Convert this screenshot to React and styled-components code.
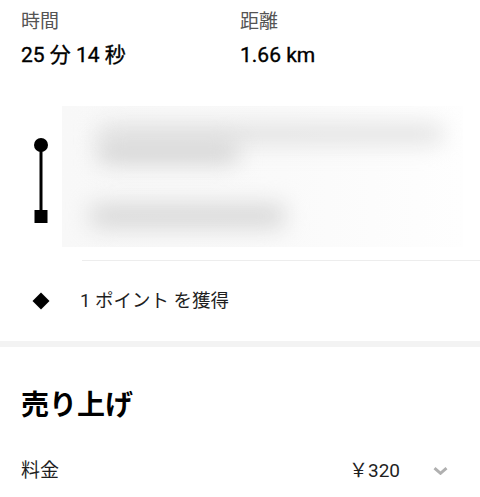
import React from "react";
import styled, { createGlobalStyle } from "styled-components";

const Global = createGlobalStyle`
  html, body { margin: 0; padding: 0; background: #fff; }
  body { font-family: Roboto, "Noto Sans CJK JP", sans-serif; color: #000; }
`;

const Page = styled.div`
  width: 480px;
  height: 497px;
  overflow: hidden;
  background: #fff;
`;

const Stats = styled.div`
  display: grid;
  grid-template-columns: 219px 1fr;
  padding: 10px 0 0 21px;
`;

const Stat = styled.div`
  display: flex;
  flex-direction: column;
`;

const StatLabel = styled.div`
  font-size: 19px;
  line-height: 24px;
  color: #545454;
`;

const StatValue = styled.div`
  margin-top: 8px;
  font-size: 21px;
  line-height: 26px;
  font-weight: 400;
  color: #000;
  -webkit-text-stroke: 0.35px #000;
`;

const RouteRow = styled.div`
  display: flex;
  margin-top: 38px;
  height: 141px;
`;

const IconCol = styled.div`
  width: ${(p) => p.$w || 62}px;
  flex: none;
  display: flex;
  justify-content: center;
  align-items: ${(p) => p.$align || "flex-start"};
`;

const BlurBox = styled.div`
  flex: 1;
  margin-right: 17px;
  overflow: hidden;
  background: linear-gradient(to right, #f8f8f8 0%, #fafafa 55%, #fefefe 100%);
  padding: 18px 0 0 0;
  box-sizing: border-box;
`;

const Bar = styled.div`
  height: ${(p) => p.$h}px;
  width: ${(p) => p.$w}px;
  margin-left: ${(p) => p.$l}px;
  margin-top: ${(p) => p.$t || 0}px;
  background: ${(p) => p.$c};
  filter: blur(11px);
  border-radius: 8px;
`;

const Divider = styled.div`
  height: 1px;
  margin: 13px 0 0 82px;
  background: #ededed;
`;

const PointsRow = styled.div`
  display: flex;
  align-items: center;
  height: 80px;
`;

const Diamond = styled.div`
  width: 12px;
  height: 12px;
  background: #000;
  transform: rotate(45deg);
  margin-left: 2px;
`;

const PointsText = styled.div`
  font-size: 18.5px;
  line-height: 24px;
  color: #1f1f1f;
`;

const Band = styled.div`
  height: 6px;
  background: #f3f3f3;
`;

const Title = styled.h2`
  margin: 41px 0 0 21px;
  font-size: 28px;
  line-height: 36px;
  font-weight: 700;
  color: #000;
`;

const FareRow = styled.div`
  display: flex;
  align-items: center;
  margin-top: 35px;
  padding: 0 32px 0 21px;
  height: 24px;
`;

const FareLabel = styled.div`
  flex: 1;
  font-size: 19px;
  line-height: 24px;
  color: #1f1f1f;
`;

const FareValue = styled.div`
  font-size: 19px;
  line-height: 24px;
  color: #1f1f1f;
`;

const Chevron = styled.svg`
  margin-left: 33px;
  display: block;
`;

export default function App() {
  return (
    <Page>
      <Global />
      <Stats>
        <Stat>
          <StatLabel>時間</StatLabel>
          <StatValue>25 分 14 秒</StatValue>
        </Stat>
        <Stat>
          <StatLabel>距離</StatLabel>
          <StatValue>1.66 km</StatValue>
        </Stat>
      </Stats>

      <RouteRow>
        <IconCol>
          <svg width="62" height="141" viewBox="0 0 62 141">
            <line x1="41" y1="39" x2="41" y2="108" stroke="#000" strokeWidth="3" />
            <circle cx="41" cy="39" r="7" fill="#000" />
            <rect x="34.5" y="104" width="13" height="13" fill="#000" />
          </svg>
        </IconCol>
        <BlurBox>
          <Bar $w={345} $h={20} $l={36} $c="#e2e2e2" />
          <Bar $w={140} $h={24} $l={36} $t={-4} $c="#d6d6d6" />
          <Bar $w={195} $h={24} $l={28} $t={40} $c="#d8d8d8" />
        </BlurBox>
      </RouteRow>

      <Divider />

      <PointsRow>
        <IconCol $w={80} $align="center">
          <Diamond />
        </IconCol>
        <PointsText>1 ポイント を獲得</PointsText>
      </PointsRow>

      <Band />

      <Title>売り上げ</Title>

      <FareRow>
        <FareLabel>料金</FareLabel>
        <FareValue>￥320</FareValue>
        <Chevron width="15" height="8" viewBox="0 0 15 8">
          <polyline points="1.5,1.2 7.5,6.3 13.5,1.2" fill="none" stroke="#b0b0b0" strokeWidth="3" />
        </Chevron>
      </FareRow>
    </Page>
  );
}
